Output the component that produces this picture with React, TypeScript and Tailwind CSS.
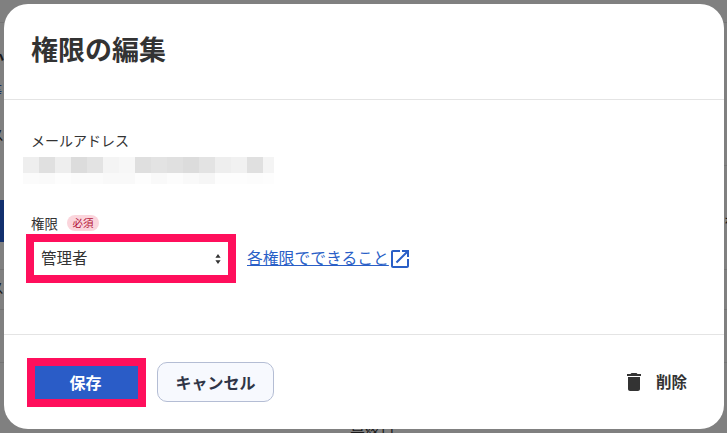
const FONT = "font-['Noto_Sans_CJK_JP','Noto_Sans',sans-serif]";

// blurred-out address, one entry per mosaic block
const mosaicTop = ["#eeeeee", "#e0e0e0", "#eeeeee", "#dcdcdc", "#e3e3e3", "#f4f4f4", "#f7f7f7", "#dfdfdf", "#e3e3e3", "#e0e0e0", "#dcdcdc", "#e3e3e3", "#eeeeee", "#f1f1f1", "#e0e0e0", "#f4f4f4"];
const mosaicBottom = ["#fbfbfb", "#fafafa", "#fdfdfd", "#fbfbfb", "#fbfbfb", "#f9f9f9", "#f9f9f9", "#fdfdfd", "#f9f9f9", "#fcfcfc", "#f9f9f9", "#f6f6f6", "#fdfdfd", "#fdfdfd", "#fcfcfc", "#fdfdfd"];

function Mosaic() {
  return (
    <div className="mt-[7px] ml-[-8px] w-[251px]">
      {[mosaicTop, mosaicBottom].map((row, r) => (
        <div key={r} className={r === 0 ? "flex h-[16px]" : "flex h-[11px]"}>
          {row.map((color, i) => (
            <div key={i} className={i === 15 ? "w-[11px]" : "w-[16px]"} style={{ background: color }} />
          ))}
        </div>
      ))}
    </div>
  );
}

// page behind the dialog, only its edges peek out
function Backdrop() {
  return (
    <div className="absolute inset-0 overflow-hidden bg-[#808080]">
      <div className="absolute left-0 top-[200px] h-[42px] w-[4px] bg-[#12306e]" />
      <div className="absolute left-0 top-[22px] h-px w-full bg-[#747474]" />
      <div className="absolute left-0 top-[269px] h-px w-full bg-[#747474]" />
      <div className="absolute left-0 top-[309px] h-px w-full bg-[#747474]" />
      <div className="absolute left-0 top-[362px] h-px w-full bg-[#747474]" />
      <div className="absolute right-0 top-[165px] h-px w-[3px] bg-[#747474]" />
      <span className="absolute left-[-12px] top-[48px] text-[16px] font-bold leading-[20px] text-[#1a1a1a]">か</span>
      <span className="absolute left-[-12px] top-[80px] text-[14px] leading-[20px] text-[#16305f]">等</span>
      <span className="absolute left-[-10px] top-[124px] text-[14px] leading-[20px] text-[#1a1a1a]">ス</span>
      <span className="absolute left-[-10px] top-[277px] text-[14px] leading-[20px] text-[#1a1a1a]">ス</span>
      <span className="absolute right-[-11px] top-[211px] text-[14px] leading-[20px] text-[#1a1a1a]">を</span>
      <span className="absolute left-[350px] top-[423px] text-[15px] leading-[20px] text-[#1a1a1a]">最終日</span>
    </div>
  );
}

export default function App() {
  return (
    <div className={`relative h-[433px] w-[727px] overflow-hidden p-[4px] ${FONT}`}>
      <Backdrop />
      <div className="relative flex h-[425px] w-[720px] flex-col rounded-[24px] bg-white text-[#333333]">
        {/* Header */}
        <div className="flex h-[96px] shrink-0 items-center border-b border-[#e4e4e4] pl-[27px] pb-[5px]">
          <h1 className="text-[27px] font-bold leading-[36px]">権限の編集</h1>
        </div>

        {/* Body */}
        <div className="flex-1 pl-[27px] pt-[30px]">
          <div className="text-[14px] leading-[20px]">メールアドレス</div>
          <Mosaic />

          <div className="mt-[30px] flex h-[18px] items-center">
            <span className="text-[13.5px] leading-[18px]">権限</span>
            <span className="ml-[9px] flex h-[16px] w-[32px] items-center justify-center rounded-full bg-[#fbd5dc] text-[10.5px] leading-none text-[#b3143a]">
              必須
            </span>
          </div>

          <div className="mt-[2px] flex items-center">
            <div className="ml-[-5px] flex h-[49px] w-[210px] items-center justify-between border-[8px] border-[#ff0f5c] bg-white pl-[7px] pr-[7px]">
              <span className="pb-[3px] text-[15.5px] leading-[22px]">管理者</span>
              <svg width="6" height="10" viewBox="0 0 6 10" fill="#333333">
                <path d="M3 0l2.6 3.8H.4zM3 10L.4 6.2h5.2z" />
              </svg>
            </div>
            <a className="mb-[2px] ml-[11px] text-[15.8px] leading-[22px] text-[#2a5fc7] underline">各権限でできること</a>
            <svg className="ml-[-1px]" width="24" height="24" viewBox="0 0 24 24" fill="#2a5fc7">
              <path d="M19 19H5V5h7V3H5c-1.11 0-2 .9-2 2v14c0 1.1.89 2 2 2h14c1.1 0 2-.9 2-2v-7h-2v7zM14 3v2h3.59l-9.83 9.83 1.41 1.41L19 6.41V10h2V3h-7z" />
            </svg>
          </div>
        </div>

        {/* Footer */}
        <div className="flex h-[95px] shrink-0 items-center border-t border-[#e4e4e4] pb-[2px] pl-[23px] pr-[37px]">
          <button className="mt-[2px] h-[49px] w-[119px] border-[8px] border-[#ff0f5c] bg-[#2a5cc7] pr-[2px] text-[16px] font-bold text-white">
            保存
          </button>
          <button className="ml-[11px] mt-[2px] h-[40px] w-[117px] rounded-[10px] border border-[#b4bdd4] bg-[#f7f9fe] text-[16px] font-bold text-[#2f3547]">
            キャンセル
          </button>
          <button className="ml-auto mt-[2px] flex items-center text-[15.5px] font-bold text-[#333333]">
            <svg width="24" height="24" viewBox="0 0 24 24" fill="#333333">
              <path d="M6 19c0 1.1.9 2 2 2h8c1.1 0 2-.9 2-2V7H6v12zM19 4h-3.5l-1-1h-5l-1 1H5v2h14V4z" />
            </svg>
            <span className="ml-[10px]">削除</span>
          </button>
        </div>
      </div>
    </div>
  );
}
